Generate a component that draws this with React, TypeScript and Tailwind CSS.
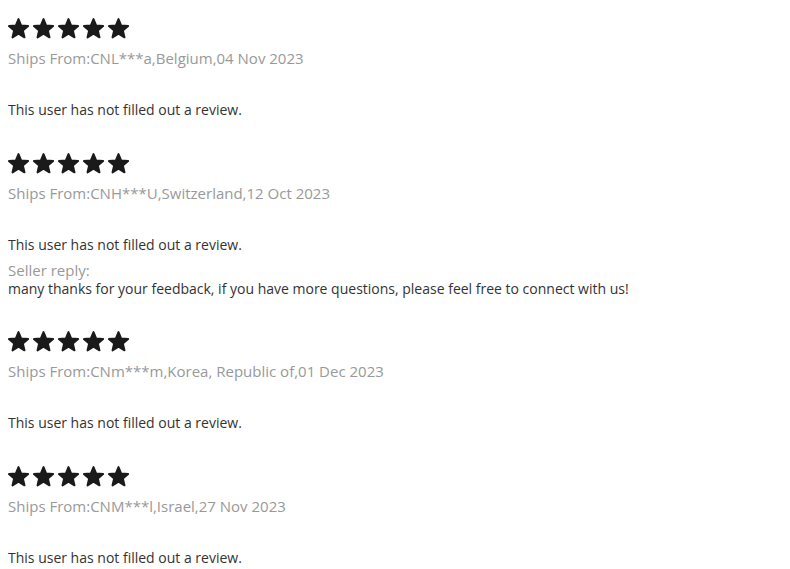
import React from "react";

function Star() {
  return (
    <svg width="25" height="24" viewBox="0 0 25 24" className="block">
      <polygon
        points="10.5,1.1 13.2,7.55 20.1,8.1 14.85,12.6 16.45,19.35 10.5,15.75 4.55,19.35 6.15,12.6 0.9,8.1 7.8,7.55"
        fill="#1a1a1a"
        stroke="#1a1a1a"
        strokeWidth="2"
        strokeLinejoin="round"
      />
    </svg>
  );
}

type Review = { ships: string; reply?: string };

const reviews: Review[] = [
  { ships: "Ships From:CNL***a,Belgium,04 Nov 2023" },
  {
    ships: "Ships From:CNH***U,Switzerland,12 Oct 2023",
    reply:
      "many thanks for your feedback, if you have more questions, please feel free to connect with us!",
  },
  { ships: "Ships From:CNm***m,Korea, Republic of,01 Dec 2023" },
  { ships: "Ships From:CNM***l,Israel,27 Nov 2023" },
];

export default function App() {
  return (
    <div
      className="w-[790px] h-[569px] bg-white overflow-hidden pl-2 pt-[18px]"
      style={{ fontFamily: '"Open Sans", sans-serif' }}
    >
      {reviews.map((r, i) => (
        <div key={i} className="mb-[33px]">
          <div className="flex">
            {[0, 1, 2, 3, 4].map((k) => (
              <Star key={k} />
            ))}
          </div>
          <div className="mt-[6px] text-[15px] leading-5 text-[#999999]">{r.ships}</div>
          <div className="mt-8 text-[14px] leading-5 text-[#333333]">
            This user has not filled out a review.
          </div>
          {r.reply && (
            <div className="mt-[5px] mb-[2px]">
              <div className="text-[15px] leading-5 text-[#999999]">Seller reply:</div>
              <div className="text-[14px] leading-[18px] text-[#333333]">{r.reply}</div>
            </div>
          )}
        </div>
      ))}
    </div>
  );
}
